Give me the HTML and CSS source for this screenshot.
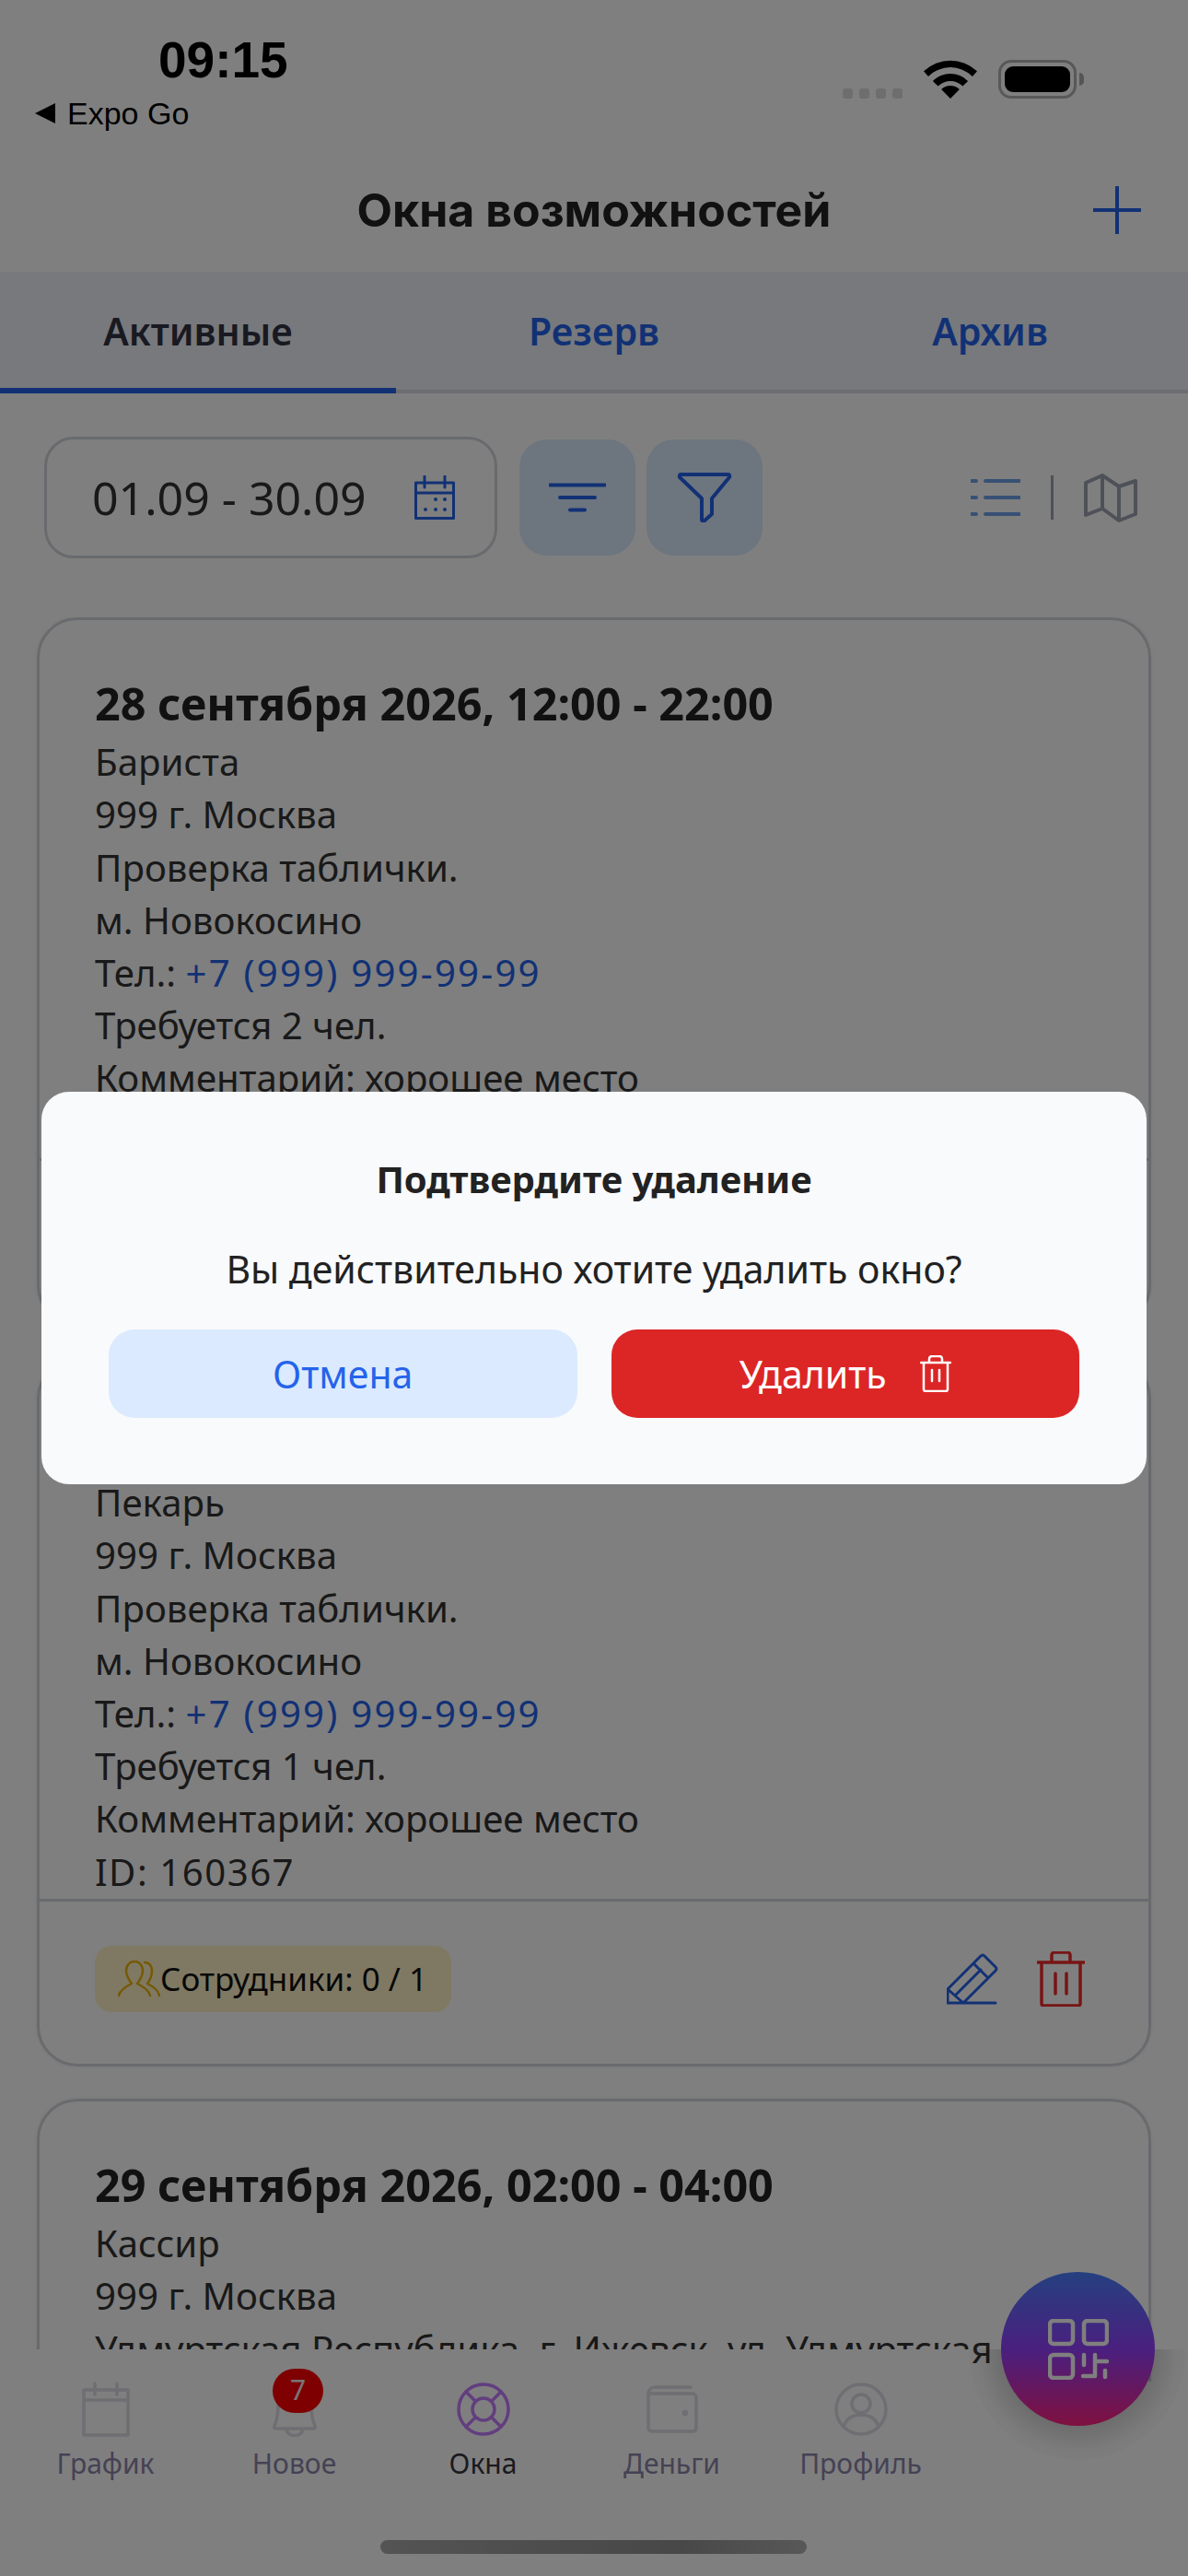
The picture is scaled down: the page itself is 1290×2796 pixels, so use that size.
FILE: index.html
```html
<!DOCTYPE html>
<html lang="ru">
<head>
    <meta charset="UTF-8">
    <meta name="viewport" content="width=device-width, initial-scale=1.0">
    <title>Окна возможностей</title>
    <link rel="stylesheet" href="styles.css">
</head>
<body>
    <div class="screen">
        <div class="status-bar">
            <div class="status-left">
                <div class="status-time">09:15</div>
                <div class="status-back"><span class="back-arrow"></span>Expo Go</div>
            </div>
            <div class="status-right">
                <div class="signal"><i></i><i></i><i></i><i></i></div>
                <svg class="wifi" viewBox="0 0 58 42"><path d="M29 42 19.100 32.100A14 14 0 0 1 38.900 32.100ZM15.600 28.600 9.900 22.900A27 27 0 0 1 48.100 22.900L42.400 28.600A19 19 0 0 0 15.600 28.600ZM5 18 0 12.300A42 42 0 0 1 58 12.300L53 18A34 34 0 0 0 5 18Z"/></svg>
                <div class="battery"><div class="battery-fill"></div></div>
                <div class="battery-tip"></div>
            </div>
        </div>

        <div class="header">
            <h1>Окна возможностей</h1>
            <svg class="add-icon" viewBox="0 0 52 52"><path d="M26 1v50M1 26h50"/></svg>
        </div>

        <div class="tabs">
            <div class="tab tab-active">Активные</div>
            <div class="tab">Резерв</div>
            <div class="tab">Архив</div>
        </div>

        <div class="toolbar">
            <div class="date-field">
                <span>01.09 - 30.09</span>
                <svg class="calendar-icon" viewBox="0 0 44 48"><path d="M1.500 8h41v38.500h-41zM1.500 19h41M11 1v12M33 1v12"/><g class="dots"><circle cx="23" cy="26" r="2"/><circle cx="33" cy="26" r="2"/><circle cx="12" cy="37" r="2"/><circle cx="23" cy="37" r="2"/><circle cx="33" cy="37" r="2"/></g></svg>
            </div>
            <div class="tool-button">
                <svg viewBox="0 0 62 32"><path d="M1 2.500h60M12 16h38M23 29.500h16"/></svg>
            </div>
            <div class="tool-button">
                <svg viewBox="0 0 58 54"><path d="M3 2h52c1 0 1.500 1.500 1 3L37 28v17l-9 8c-1 0-2-1-2-2V28L2 5C1.500 3.500 2 2 3 2Z"/></svg>
            </div>
            <div class="view-switch">
                <svg class="list-icon" viewBox="0 0 54 42"><path d="M1 3h5M16 3h37M1 21h5M16 21h37M1 39h5M16 39h37"/></svg>
                <div class="view-sep"></div>
                <svg class="map-icon" viewBox="0 0 58 54"><path d="M2 11 20 3l18 12 18-6v36l-18 7-18-13-18 7ZM20 3v36M38 15v37"/></svg>
            </div>
        </div>

        <div class="list">
            <div class="card">
                <div class="card-body">
                    <div class="card-title">28 сентября 2026, 12:00 - 22:00</div>
                    <div>Бариста</div>
                    <div>999 г. Москва</div>
                    <div>Проверка таблички.</div>
                    <div>м. Новокосино</div>
                    <div>Тел.: <a class="phone">+7 (999) 999-99-99</a></div>
                    <div>Требуется 2 чел.</div>
                    <div>Комментарий: хорошее место</div>
                    <div class="card-id">ID: 160366</div>
                </div>
                <div class="card-footer">
                    <div class="staff-tag">
                        <svg class="staff-icon" viewBox="0 0 46 40"><path d="M1 38c1-6 8-10 14-13-3-4-6-9-6-14C9 5 13 1 18 1s9 4 9 10c0 5-3 10-6 14 6 3 13 7 14 13"/><path d="M29 2c5 0 8 4 8 9 0 5-2 10-5 14 6 3 12 7 13 13"/></svg>
                        Сотрудники: 0 / 2
                    </div>
                    <div class="card-actions"></div>
                </div>
            </div>

            <div class="card">
                <div class="card-body">
                    <div class="card-title">28 сентября 2026, 18:00 - 22:00</div>
                    <div>Пекарь</div>
                    <div>999 г. Москва</div>
                    <div>Проверка таблички.</div>
                    <div>м. Новокосино</div>
                    <div>Тел.: <a class="phone">+7 (999) 999-99-99</a></div>
                    <div>Требуется 1 чел.</div>
                    <div>Комментарий: хорошее место</div>
                    <div class="card-id">ID: 160367</div>
                </div>
                <div class="card-footer">
                    <div class="staff-tag">
                        <svg class="staff-icon" viewBox="0 0 46 40"><path d="M1 38c1-6 8-10 14-13-3-4-6-9-6-14C9 5 13 1 18 1s9 4 9 10c0 5-3 10-6 14 6 3 13 7 14 13"/><path d="M29 2c5 0 8 4 8 9 0 5-2 10-5 14 6 3 12 7 13 13"/></svg>
                        Сотрудники: 0 / 1
                    </div>
                    <div class="card-actions">
                        <svg class="edit-icon" viewBox="0 0 56 56"><path d="M1 54V39L37 3q2-2 4 0L53 15q2 2 0 4L18 54ZM1 54h52M1 39l17 15M29 11l16 16M9 46 37 18"/></svg>
                        <svg class="trash-icon" viewBox="0 0 52 60"><path d="M1 12h50M5 12v45c0 1 1 2 2 2h38c1 0 2-1 2-2V12M16 12V4c0-1 1-3 3-3h14c2 0 3 2 3 3v8M20 24v22M32 24v22"/></svg>
                    </div>
                </div>
            </div>

            <div class="card">
                <div class="card-body">
                    <div class="card-title">29 сентября 2026, 02:00 - 04:00</div>
                    <div>Кассир</div>
                    <div>999 г. Москва</div>
                    <div>Удмуртская Республика, г. Ижевск, ул. Удмуртская</div>
                </div>
            </div>
        </div>

        <div class="tab-bar">
            <div class="tab-bar-bg"></div>
            <div class="nav-items">
                <div class="nav-item">
                    <svg class="nav-icon" viewBox="0 0 60 60"><path d="M6 9h48v49H6zM6 20h48M18 2v12M42 2v12"/></svg>
                    <span>График</span>
                </div>
                <div class="nav-item">
                    <svg class="nav-icon" viewBox="0 0 60 60"><path d="M30 4c-12 0-18 8-18 20 0 12-1 18-4 24-1 2 0 3 2 3h40c2 0 3-1 2-3-3-6-4-12-4-24 0-12-6-20-18-20ZM21 51c0 10 18 10 18 0"/></svg>
                    <span>Новое</span>
                    <span class="badge">7</span>
                </div>
                <div class="nav-item nav-active">
                    <svg class="nav-icon" viewBox="0 0 60 60"><circle cx="30" cy="30" r="27"/><circle cx="30" cy="30" r="12"/><path d="M11 11l10 10M49 11 39 21M11 49l10-10M49 49 39 39"/></svg>
                    <span>Окна</span>
                </div>
                <div class="nav-item">
                    <svg class="nav-icon" viewBox="0 0 60 60"><path d="M50 6H12C7 6 4 9 4 13v37c0 3 2 4 5 4h43c2 0 4-1 4-4V17c0-2-2-4-4-4H4"/><circle cx="44" cy="34" r="1.500"/></svg>
                    <span>Деньги</span>
                </div>
                <div class="nav-item">
                    <svg class="nav-icon" viewBox="0 0 60 60"><circle cx="30" cy="30" r="27"/><circle cx="30" cy="24" r="10"/><path d="M11 49c3-9 10-13 19-13s16 4 19 13"/></svg>
                    <span>Профиль</span>
                </div>
            </div>
            <div class="fab-halo"></div>
            <div class="fab">
                <svg viewBox="0 0 66 66"><rect x="2" y="2" width="25" height="25" rx="4"/><rect x="39" y="2" width="25" height="25" rx="4"/><rect x="2" y="39" width="25" height="25" rx="4"/><path d="M39 39v11M51 39v23H38M51 46h13M62 56v7"/></svg>
            </div>
        </div>

        <div class="home-indicator"></div>
    </div>

    <div class="overlay">
        <div class="modal">
            <div class="modal-title">Подтвердите удаление</div>
            <div class="modal-text">Вы действительно хотите удалить окно?</div>
            <div class="modal-buttons">
                <div class="modal-button button-cancel">Отмена</div>
                <div class="modal-button button-delete">
                    Удалить
                    <svg class="button-icon" viewBox="0 0 34 40"><path d="M1 8h32M4 8v29c0 1 1 2 2 2h22c1 0 2-1 2-2V8M10 8V4c0-2 1-3 3-3h8c2 0 3 1 3 3v4M13 16v12M21 16v12"/></svg>
                </div>
            </div>
        </div>
    </div>
</body>
</html>
```

FILE: styles.css
```css
* {
    box-sizing: border-box;
}
html,
body {
    margin: 0;
    padding: 0;
}
body {
    width: 1290px;
    height: 2796px;
    overflow: hidden;
    background-color: #fff;
    font-family: "Noto Sans", sans-serif;
    color: #333;
}
svg {
    display: block;
    fill: none;
    stroke-linecap: round;
    stroke-linejoin: round;
}
.screen {
    position: relative;
    display: flex;
    flex-direction: column;
    height: 2796px;
    padding-bottom: 211px;
    overflow: hidden;
}

/* status bar */
.status-bar {
    display: flex;
    justify-content: space-between;
    height: 165px;
    font-family: "Liberation Sans", sans-serif;
    color: #000;
}
.status-left {
    padding: 33px 0 0 38px;
}
.status-time {
    margin-left: 134px;
    font-size: 55px;
    font-weight: 700;
    line-height: 64px;
}
.status-back {
    display: flex;
    align-items: center;
    gap: 13px;
    margin-top: 4px;
    font-size: 34px;
    line-height: 44px;
}
.back-arrow {
    width: 0;
    height: 0;
    border-top: 11px solid transparent;
    border-bottom: 11px solid transparent;
    border-right: 22px solid #000;
}
.status-right {
    display: flex;
    align-items: flex-start;
    padding: 65px 113px 0 0;
}
.signal {
    display: flex;
    gap: 7px;
    margin: 31px 23px 0 0;
}
.signal i {
    width: 11px;
    height: 11px;
    border-radius: 3px;
    background-color: #dcdcdc;
}
.wifi {
    width: 58px;
    height: 42px;
    fill: #000;
    margin-right: 23px;
}
.battery {
    width: 85px;
    height: 42px;
    padding: 4px;
    border: 3px solid #b0b0b0;
    border-radius: 14px;
}
.battery-fill {
    height: 100%;
    border-radius: 9px;
    background-color: #000;
}
.battery-tip {
    width: 5px;
    height: 14px;
    margin: 14px 0 0 3px;
    border-radius: 0 5px 5px 0;
    background-color: #aaa;
}

/* header */
.header {
    position: relative;
    display: flex;
    align-items: center;
    justify-content: center;
    height: 130px;
    padding-bottom: 4px;
}
.header h1 {
    margin: 0;
    font-family: "Inter", sans-serif;
    font-size: 50px;
    font-weight: 700;
    color: #222;
}
.add-icon {
    position: absolute;
    right: 51px;
    top: 37px;
    width: 52px;
    height: 52px;
    stroke: #2563eb;
    stroke-width: 4;
}

/* tabs */
.tabs {
    display: flex;
    height: 132px;
    background-color: #eef3f9;
    border-bottom: 4px solid #dddbe4;
}
.tab {
    flex: 1;
    height: 132px;
    padding-top: 38px;
    text-align: center;
    font-size: 41px;
    font-weight: 600;
    line-height: 52px;
    color: #2563eb;
}
.tab-active {
    border-bottom: 6px solid #2563eb;
    color: #334;
}

/* toolbar */
.toolbar {
    display: flex;
    align-items: center;
    height: 243px;
    padding: 0 55px 18px 48px;
    flex-shrink: 0;
}
.date-field {
    display: flex;
    align-items: center;
    justify-content: space-between;
    width: 492px;
    height: 132px;
    margin-right: 24px;
    padding: 0 43px 0 49px;
    border: 3px solid #d1d5db;
    border-radius: 32px;
    font-size: 50px;
    color: #333;
}
.calendar-icon {
    width: 44px;
    height: 48px;
    stroke: #2563eb;
    stroke-width: 3;
}
.dots circle {
    fill: #2563eb;
    stroke: none;
}
.tool-button {
    display: flex;
    align-items: center;
    justify-content: center;
    width: 126px;
    height: 126px;
    margin-right: 12px;
    border-radius: 30px;
    background-color: #dbeafe;
}
.tool-button svg {
    width: 62px;
    height: 54px;
    stroke: #2563eb;
    stroke-width: 4;
}
.view-switch {
    display: flex;
    align-items: center;
    margin-left: auto;
}
.list-icon {
    width: 54px;
    height: 42px;
    stroke: #6fa0ea;
    stroke-width: 4;
}
.view-sep {
    width: 3px;
    height: 48px;
    margin: 0 33px;
    background-color: #9ca3af;
}
.map-icon {
    width: 58px;
    height: 54px;
    stroke: #9ca3af;
    stroke-width: 4;
}

/* cards */
.list {
    flex: 1;
    min-height: 0;
    overflow: hidden;
    padding: 0 40px;
}
.card {
    height: 769px;
    margin-bottom: 35px;
    border: 3px solid #d1d5db;
    border-radius: 44px;
    box-shadow: 0 0 4px rgba(0, 0, 0, 0.08);
    display: flex;
    flex-direction: column;
}
.card:last-child {
    margin-bottom: 0;
}
.card-body {
    height: 584px;
    padding: 62px 60px 0;
    font-size: 40.200px;
    line-height: 57.200px;
    white-space: nowrap;
    overflow: hidden;
}
.card-title {
    margin-bottom: 6px;
    font-size: 48.500px;
    font-weight: 700;
    color: #222;
}
.phone {
    color: #2563eb;
    letter-spacing: 2.200px;
}
.card-id {
    letter-spacing: 1.500px;
}
.card-footer {
    display: flex;
    align-items: center;
    justify-content: space-between;
    height: 179px;
    padding: 0 69px 9px 60px;
    border-top: 3px solid #d1d5db;
}
.staff-tag {
    display: flex;
    align-items: center;
    gap: 0;
    height: 72px;
    padding: 0 26px 0 25px;
    border-radius: 18px;
    background-color: #fef3c7;
    font-size: 35px;
    color: #111;
}
.staff-icon {
    width: 46px;
    height: 40px;
    stroke: #eab308;
    stroke-width: 2.500;
}
.card-actions {
    display: flex;
    align-items: center;
    gap: 42px;
}
.edit-icon {
    width: 56px;
    height: 56px;
    stroke: #2563eb;
    stroke-width: 3;
}
.trash-icon {
    width: 52px;
    height: 60px;
    stroke: #ef2b2b;
    stroke-width: 3.500;
}

/* bottom navigation */
.tab-bar {
    position: absolute;
    left: 0;
    right: 0;
    bottom: 0;
    height: 246px;
}
.tab-bar-bg {
    height: 100%;
    background-color: #fff;
    -webkit-mask-image: radial-gradient(circle 118px at 1170px 2px, transparent 117.500px, #000 118px);
    mask-image: radial-gradient(circle 118px at 1170px 2px, transparent 117.500px, #000 118px);
}
.nav-items {
    position: absolute;
    left: 12px;
    top: 35px;
    display: flex;
}
.nav-item {
    position: relative;
    display: flex;
    flex-direction: column;
    align-items: center;
    width: 205px;
    font-size: 30px;
    line-height: 38px;
    color: #8b84a8;
}
.nav-icon {
    width: 60px;
    height: 60px;
    margin-bottom: 10px;
    stroke: #dcdce6;
    stroke-width: 3.500;
}
.nav-active {
    color: #34343f;
}
.nav-active .nav-icon {
    stroke: #c47cff;
}
.badge {
    position: absolute;
    left: 79px;
    top: -14px;
    width: 55px;
    height: 48px;
    border-radius: 24px;
    background-color: #ff0000;
    color: #eee;
    font-size: 30px;
    line-height: 46px;
    text-align: center;
}
.fab-halo {
    position: absolute;
    left: 1052px;
    top: -116px;
    width: 236px;
    height: 236px;
    border-radius: 50%;
    background: radial-gradient(closest-side, rgba(0, 0, 0, 0.14) 70%, rgba(0, 0, 0, 0.03) 92%, rgba(0, 0, 0, 0.02) 100%);
    clip-path: inset(116px 0 0 0);
}
.fab {
    position: absolute;
    left: 1087px;
    top: -84px;
    display: flex;
    align-items: center;
    justify-content: center;
    width: 167px;
    height: 167px;
    border-radius: 50%;
    background: linear-gradient(#4a80ff, #9440ff 50%, #ff2080);
}
.fab svg {
    width: 66px;
    height: 66px;
    stroke: #fff;
    stroke-width: 4.500;
}
.home-indicator {
    position: absolute;
    left: 413px;
    bottom: 24px;
    width: 463px;
    height: 15px;
    border-radius: 8px;
    background: linear-gradient(90deg, #a8a8a8, #909090 70%, #b0b0b0);
}

/* delete confirmation */
.overlay {
    position: fixed;
    inset: 0;
    display: flex;
    align-items: center;
    justify-content: center;
    background-color: rgba(0, 0, 0, 0.5);
}
.modal {
    width: 1200px;
    height: 426px;
    padding: 72px 73px;
    border-radius: 30px;
    background-color: #f9fafc;
    text-align: center;
}
.modal-title {
    font-size: 40px;
    font-weight: 700;
    line-height: 46px;
    color: #222;
}
.modal-text {
    margin-top: 47px;
    font-size: 41px;
    line-height: 54px;
    color: #222;
}
.modal-buttons {
    display: flex;
    gap: 37px;
    margin-top: 39px;
}
.modal-button {
    flex: 1;
    display: flex;
    align-items: center;
    justify-content: center;
    height: 96px;
    border-radius: 28px;
    font-size: 41px;
}
.button-cancel {
    background-color: #dbeafe;
    color: #2563eb;
}
.button-delete {
    gap: 36px;
    background-color: #dc2626;
    color: #fff;
}
.button-icon {
    width: 34px;
    height: 40px;
    stroke: #fff;
    stroke-width: 2.500;
}
```
